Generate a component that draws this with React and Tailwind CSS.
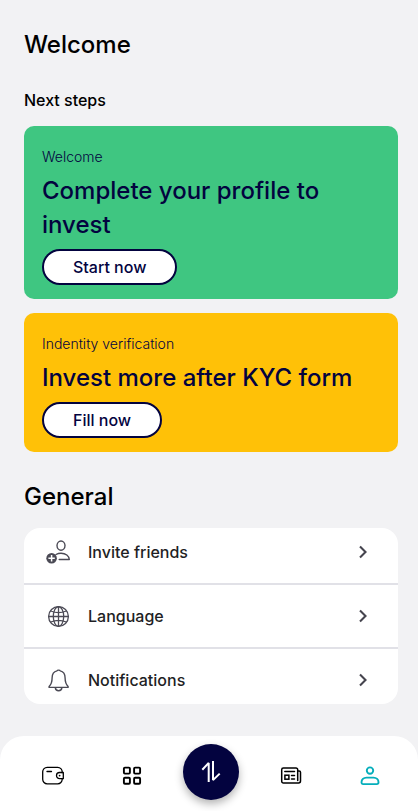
import React from "react";

function InviteIcon() {
  return (
    <svg width="24" height="24" viewBox="0 0 24 24" fill="none" stroke="#4b4a55" strokeWidth="1.4" aria-hidden="true">
      <ellipse cx="15" cy="5.6" rx="4" ry="4.6" />
      <path d="M10 14.5C11.5 13.6 13.1 13.2 15 13.2c4.800 0 8 2.900 8.300 6.300H13.200" strokeLinejoin="round" strokeLinecap="round" />
      <circle cx="5.600" cy="18.200" r="5.300" fill="#4b4a55" stroke="none" />
      <path d="M5.600 15v6.400M2.400 18.200h6.400" stroke="#fff" strokeWidth="1.500" />
    </svg>
  );
}

function GlobeIcon() {
  return (
    <svg width="24" height="24" viewBox="0 0 24 24" fill="none" stroke="#4b4a55" strokeWidth="1.3" aria-hidden="true">
      <circle cx="12.500" cy="12.500" r="9.900" />
      <ellipse cx="12.500" cy="12.500" rx="5.200" ry="9.900" />
      <path d="M12.500 2.600v19.800M2.600 12.500h19.800M4.700 7c4.600 2 11 2 15.600 0M4.700 18c4.600-2 11-2 15.600 0" />
    </svg>
  );
}

function BellIcon() {
  return (
    <svg width="24" height="24" viewBox="0 0 24 24" fill="none" stroke="#4b4a55" strokeWidth="1.4" strokeLinejoin="round" aria-hidden="true">
      <path d="M11 2.900c.300-1 2.900-1 3.200 0 3.400.800 4.900 3.600 4.900 7 0 4.600 1.100 6.600 3 8.500v1H3.100v-1c1.900-1.900 3-3.900 3-8.500 0-3.400 1.500-6.200 4.900-7z" />
      <path d="M9.300 19.600c.200 2.200 1.500 3.100 3.300 3.100s3.100-.900 3.300-3.100" />
    </svg>
  );
}

function ChevronIcon() {
  return (
    <svg width="16" height="16" viewBox="0 0 16 16" fill="none" stroke="#45444e" strokeWidth="2.100" aria-hidden="true">
      <path d="M5 2.500l5.500 5.500L5 13.500" />
    </svg>
  );
}

function WalletIcon() {
  return (
    <svg width="24" height="24" viewBox="0 0 24 24" fill="none" stroke="#000" strokeWidth="1.300" strokeLinecap="round" aria-hidden="true">
      <path d="M21.200 8.700V7.800a4.500 4.500 0 0 0-4.500-4.500H6.200a4.500 4.500 0 0 0-4.500 4.500v7.500a4.500 4.500 0 0 0 4.500 4.500h10.500a4.500 4.500 0 0 0 4.500-4.500v-.600" />
      <path d="M22.300 8.500h-3.700a3.100 3.100 0 0 0 0 6.200h3.700z" strokeLinejoin="round" />
      <path d="M6 7.500h4.500" />
      <circle cx="18.600" cy="11.600" r=".900" fill="#000" stroke="none" />
    </svg>
  );
}

function GridIcon() {
  return (
    <svg width="24" height="24" viewBox="0 0 24 24" fill="none" stroke="#000" strokeWidth="1.900" aria-hidden="true">
      <rect x="3.900" y="3.600" width="6" height="6" rx="1" />
      <rect x="14.100" y="3.600" width="6" height="6" rx="1" />
      <rect x="3.900" y="13.800" width="6" height="6" rx="1" />
      <rect x="14.100" y="13.800" width="6" height="6" rx="1" />
    </svg>
  );
}

function TradeIcon() {
  return (
    <svg width="24" height="24" viewBox="0 0 24 24" fill="none" stroke="#fff" strokeWidth="2" strokeLinejoin="bevel" aria-hidden="true">
      <path d="M3.300 9.700l6.400-6.800V22" />
      <path d="M14 1v19.100l6.700-6.500" />
    </svg>
  );
}

function NewsIcon() {
  return (
    <svg width="24" height="24" viewBox="0 0 24 24" fill="none" stroke="#000" strokeWidth="1.500" strokeLinejoin="round" strokeLinecap="round" aria-hidden="true">
      <path d="M18.700 16.500V5.700A1.700 1.700 0 0 0 17 4H4.400a1.700 1.700 0 0 0-1.700 1.700v11.600A1.700 1.700 0 0 0 4.400 19h15.200a1.900 1.900 0 0 0 1.900-1.900V8.300a1.400 1.400 0 0 0-1.400-1.400h-1.400" />
      <path d="M5.800 7.500h9.700M12.500 11.500h3M12.500 15h3" />
      <rect x="5.900" y="11.200" width="4" height="4" strokeLinejoin="miter" />
    </svg>
  );
}

function ProfileIcon() {
  return (
    <svg width="24" height="24" viewBox="0 0 24 24" fill="none" stroke="#05aebb" strokeWidth="1.900" strokeLinejoin="round" aria-hidden="true">
      <circle cx="12" cy="6.600" r="3.200" />
      <path d="M8.500 13.600h7c3 0 5 2 5 4.700 0 1.100-.600 1.800-1.700 1.800H5.200c-1.100 0-1.700-.700-1.700-1.800 0-2.700 2-4.700 5-4.700z" />
    </svg>
  );
}

function StepCard({ color, label, title, action }) {
  return (
    <article className={`flex flex-col items-start rounded-[10px] px-[18px] pb-[14px] pt-[21px] text-[#03033f] ${color}`}>
      <p className="text-sm leading-5 font-light">{label}</p>
      <h3 className="my-[7px] text-2xl leading-[34px] font-medium">{title}</h3>
      <button type="button" className="h-9 rounded-full border-2 border-[#03033f] bg-white px-[29px] text-base leading-5 font-medium">
        {action}
      </button>
    </article>
  );
}

const settings = [
  { label: "Invite friends", Icon: InviteIcon },
  { label: "Language", Icon: GlobeIcon },
  { label: "Notifications", Icon: BellIcon },
];

const tabs = [
  { label: "Wallet", Icon: WalletIcon },
  { label: "Products", Icon: GridIcon },
  { label: "Trade", Icon: TradeIcon, primary: true },
  { label: "News", Icon: NewsIcon },
  { label: "Profile", Icon: ProfileIcon },
];

export default function App() {
  return (
    <div className="flex min-h-screen flex-col bg-[#f2f2f4] font-['Inter',sans-serif] text-black">
      <main className="flex-1 pt-7 pr-5 pb-8 pl-6">
        <h1 className="text-2xl leading-[34px] font-medium">Welcome</h1>
        <h2 className="mt-[26px] text-base leading-6 font-medium">Next steps</h2>
        <div className="mt-[14px] flex flex-col gap-[14px]">
          <StepCard color="bg-[#3fc681]" label="Welcome" title="Complete your profile to invest" action="Start now" />
          <StepCard color="bg-[#ffc107]" label="Indentity verification" title="Invest more after KYC form" action="Fill now" />
        </div>
        <h2 className="mt-7 text-2xl leading-[34px] font-medium">General</h2>
        <ul className="mt-[14px] divide-y-2 divide-[#e1e1e7] overflow-hidden rounded-2xl bg-white">
          {settings.map(({ label, Icon }) => (
            <li key={label} className="py-[7px] first:pt-0 last:pb-0">
              <button type="button" className="flex h-12 w-full items-center gap-[18px] pr-[27px] pl-[22px] text-left text-base leading-6 font-medium text-[#1f1f25]">
                <Icon />
                <span className="flex-1">{label}</span>
                <ChevronIcon />
              </button>
            </li>
          ))}
        </ul>
      </main>
      <nav className="grid h-[75px] grid-cols-5 items-start justify-items-center rounded-t-3xl bg-white pt-2 pr-2 pl-[13px]">
        {tabs.map(({ label, Icon, primary }) => (
          <button
            key={label}
            type="button"
            aria-label={label}
            className={
              primary
                ? "flex size-14 items-center justify-center rounded-full bg-[#03033f] shadow-[0_4px_8px_rgba(0,0,0,0.3)]"
                : "flex h-16 w-14 items-center justify-center"
            }
          >
            <Icon />
          </button>
        ))}
      </nav>
    </div>
  );
}
